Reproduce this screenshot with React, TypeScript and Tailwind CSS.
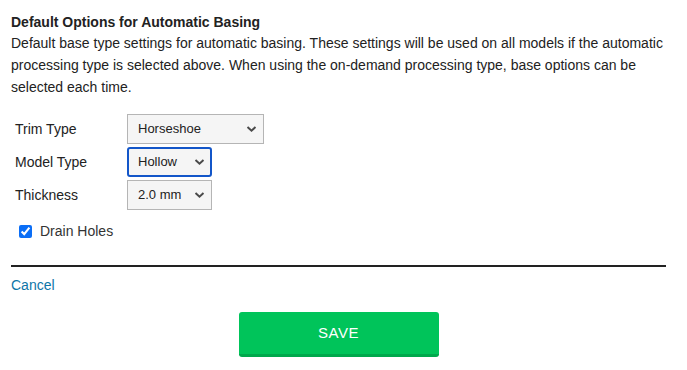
import { useState } from "react";

const Chevron = () => (
  <svg
    className="pointer-events-none absolute right-[7px] top-1/2 -translate-y-1/2"
    width="11"
    height="7"
    viewBox="0 0 11 7"
  >
    <path d="M1.5 1.5 L5.5 5.2 L9.5 1.5" fill="none" stroke="#4a4a4a" strokeWidth="2" />
  </svg>
);

const Select = ({
  value,
  options,
  width,
  focused,
}: {
  value: string;
  options: string[];
  width: string;
  focused?: boolean;
}) => {
  const [val, setVal] = useState(value);
  return (
    <div className={`relative ${width} h-[30px]`}>
      <select
        value={val}
        onChange={(e) => setVal(e.target.value)}
        className={
          focused
            ? "h-full w-full appearance-none rounded-[3px] border-2 border-[#1356c9] bg-[#f5f5f5] pl-[9px] text-[13px] text-[#222] outline-none"
            : "h-full w-full appearance-none border border-[#b5b5b5] bg-[#f5f5f5] pl-[10px] text-[13px] text-[#222] outline-none"
        }
      >
        {options.map((o) => (
          <option key={o}>{o}</option>
        ))}
      </select>
      <Chevron />
    </div>
  );
};

export default function App() {
  const rows = [
    { label: "Trim Type", value: "Horseshoe", options: ["Horseshoe", "Full", "None"], width: "w-[137px]" },
    { label: "Model Type", value: "Hollow", options: ["Hollow", "Solid"], width: "w-[85px]", focused: true },
    { label: "Thickness", value: "2.0 mm", options: ["1.0 mm", "2.0 mm", "3.0 mm"], width: "w-[85px]" },
  ];

  return (
    <div className="min-h-[370px] bg-white px-[11px] pt-[12px] font-['Liberation_Sans',Arial,sans-serif] text-[14px] text-[#222]">
      <h2 className="text-[14px] font-bold leading-[20px]">Default Options for Automatic Basing</h2>
      <p className="leading-[22px]">
        Default base type settings for automatic basing. These settings will be used on all models if the automatic
        processing type is selected above. When using the on-demand processing type, base options can be
        selected each time.
      </p>

      <div className="mt-[16px] flex flex-col gap-[3px]">
        {rows.map((r) => (
          <div key={r.label} className="flex items-center">
            <label className="w-[116px] pl-[4px]">{r.label}</label>
            <Select value={r.value} options={r.options} width={r.width} focused={r.focused} />
          </div>
        ))}
      </div>

      <label className="mt-[11px] flex items-center pl-[8px] text-[#333]">
        <input type="checkbox" defaultChecked className="h-[13px] w-[13px] accent-[#0b6ef6]" />
        <span className="ml-[8px]">Drain Holes</span>
      </label>

      <div className="mr-[10px] mt-[23px] h-[2px] bg-[#222]" />

      <a href="#" className="mt-[9px] block leading-[18px] text-[#0d76a8]">
        Cancel
      </a>

      <div className="mr-[10px] mt-[18px] flex justify-center">
        <button className="h-[45px] w-[200px] rounded-[3px] border-b-[3px] border-[#00a84c] bg-[#00c45a] text-[15px] font-medium tracking-[0.5px] text-white">
          SAVE
        </button>
      </div>
    </div>
  );
}
